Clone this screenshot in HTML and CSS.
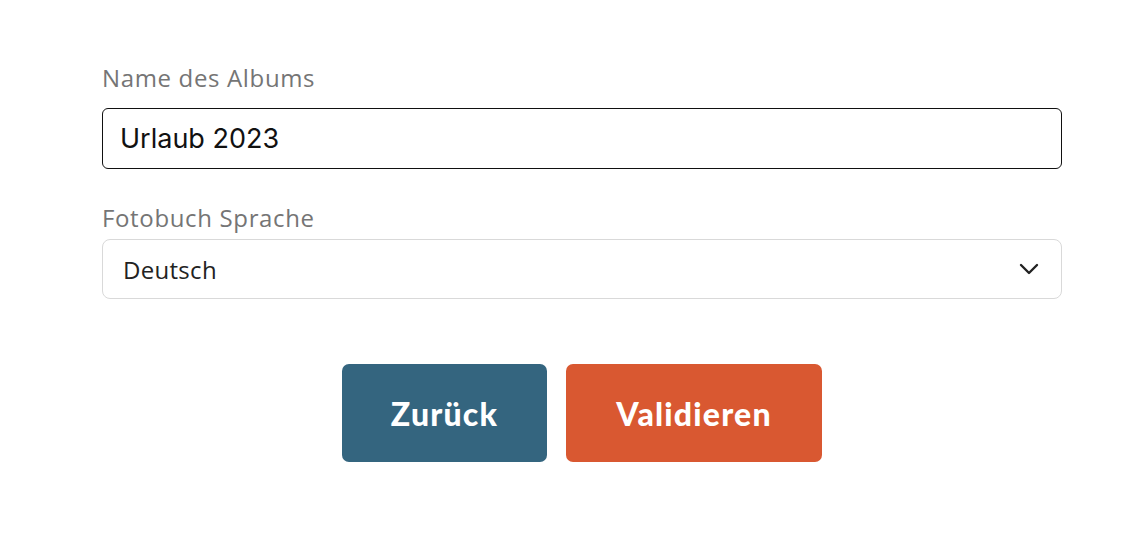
FILE: index.html
```html
<!DOCTYPE html>
<html lang="de">
<head>
<meta charset="utf-8">
<link rel="stylesheet" href="styles.css">
</head>
<body>
<form class="form">
  <div class="field">
    <label class="label">Name des Albums</label>
    <div class="input">Urlaub 2023</div>
  </div>
  <div class="field field-second">
    <label class="label">Fotobuch Sprache</label>
    <div class="select">
      <span>Deutsch</span>
      <svg class="chev" width="20" height="12" viewBox="0 0 20 12"><path d="M2 2 L10 10 L18 2" fill="none" stroke="#222" stroke-width="2.4" stroke-linecap="round" stroke-linejoin="round"/></svg>
    </div>
  </div>
  <div class="actions">
    <button type="button" class="btn btn-back">Zurück</button>
    <button type="button" class="btn btn-ok">Validieren</button>
  </div>
</form>
</body>
</html>
```
FILE: styles.css
```css
html, body { margin: 0; padding: 0; background: #fff; }
body { font-family: "Open Sans", Lato, sans-serif; }
.form { width: 960px; margin-left: 102px; padding-top: 62px; }
.field { display: flex; flex-direction: column; }
.field-second { margin-top: 33px; }
.label { font-size: 24px; line-height: 32px; color: #757575; margin-bottom: 14px; letter-spacing: 0.65px; }
.field-second .label { margin-bottom: 5px; }
.input {
  box-sizing: border-box; height: 61px; border: 1px solid #111; border-radius: 6px;
  padding: 0 17px; display: flex; align-items: center;
  font-family: Inter, sans-serif; font-size: 27px; color: #111;
}
.select {
  box-sizing: border-box; height: 60px; border: 1px solid #d9d9d9; border-radius: 8px;
  padding: 0 22px 0 20px; display: flex; align-items: center; justify-content: space-between;
  font-size: 24px; letter-spacing: 0.3px; color: #222;
}
.chev { display: block; }
.actions { display: flex; justify-content: center; gap: 19px; margin-top: 65px; }
.btn {
  height: 98px; border: none; border-radius: 7px; color: #fff;
  font-family: Lato, sans-serif; font-weight: 900; font-size: 32px; letter-spacing: 1.2px;
}
.btn-back { width: 205px; background: #34657f; }
.btn-ok { width: 256px; background: #d95831; }
```
